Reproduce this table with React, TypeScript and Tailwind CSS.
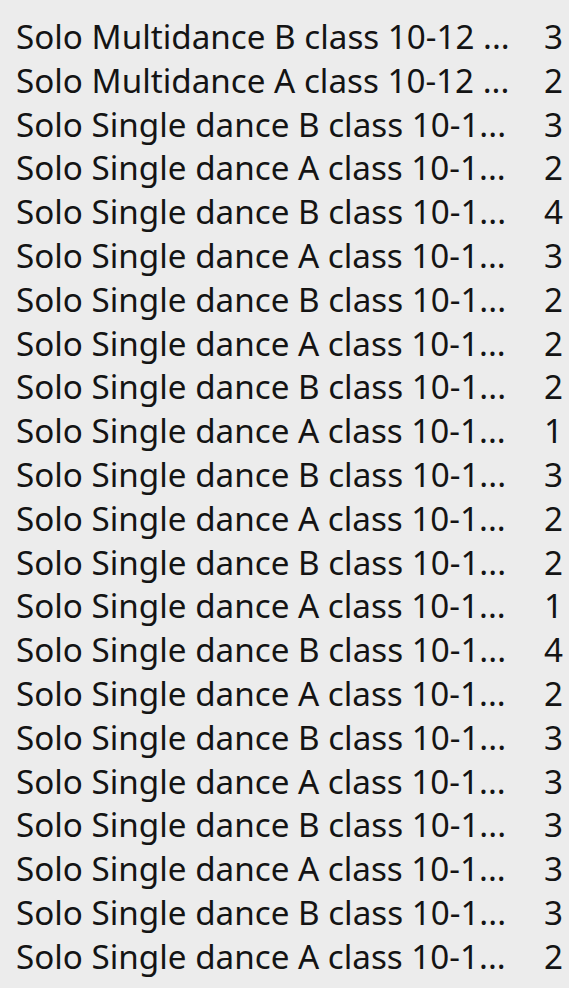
const rows: [string, number][] = [
  ["Solo Multidance B class 10-12 ...", 3],
  ["Solo Multidance A class 10-12 ...", 2],
  ["Solo Single dance B class 10-1...", 3],
  ["Solo Single dance A class 10-1...", 2],
  ["Solo Single dance B class 10-1...", 4],
  ["Solo Single dance A class 10-1...", 3],
  ["Solo Single dance B class 10-1...", 2],
  ["Solo Single dance A class 10-1...", 2],
  ["Solo Single dance B class 10-1...", 2],
  ["Solo Single dance A class 10-1...", 1],
  ["Solo Single dance B class 10-1...", 3],
  ["Solo Single dance A class 10-1...", 2],
  ["Solo Single dance B class 10-1...", 2],
  ["Solo Single dance A class 10-1...", 1],
  ["Solo Single dance B class 10-1...", 4],
  ["Solo Single dance A class 10-1...", 2],
  ["Solo Single dance B class 10-1...", 3],
  ["Solo Single dance A class 10-1...", 3],
  ["Solo Single dance B class 10-1...", 3],
  ["Solo Single dance A class 10-1...", 3],
  ["Solo Single dance B class 10-1...", 3],
  ["Solo Single dance A class 10-1...", 2],
];

export default function App() {
  return (
    <div className="min-h-screen w-[569px] bg-[#ececec] pt-[15px] font-['Noto_Sans',sans-serif] text-[33.2px] leading-[43.8px] text-[#141414]">
      <ul>
        {rows.map(([label, count], i) => (
          <li key={i} className="flex items-center justify-between pl-4 pr-[6px]">
            <span className="whitespace-nowrap">{label}</span>
            <span>{count}</span>
          </li>
        ))}
      </ul>
    </div>
  );
}
